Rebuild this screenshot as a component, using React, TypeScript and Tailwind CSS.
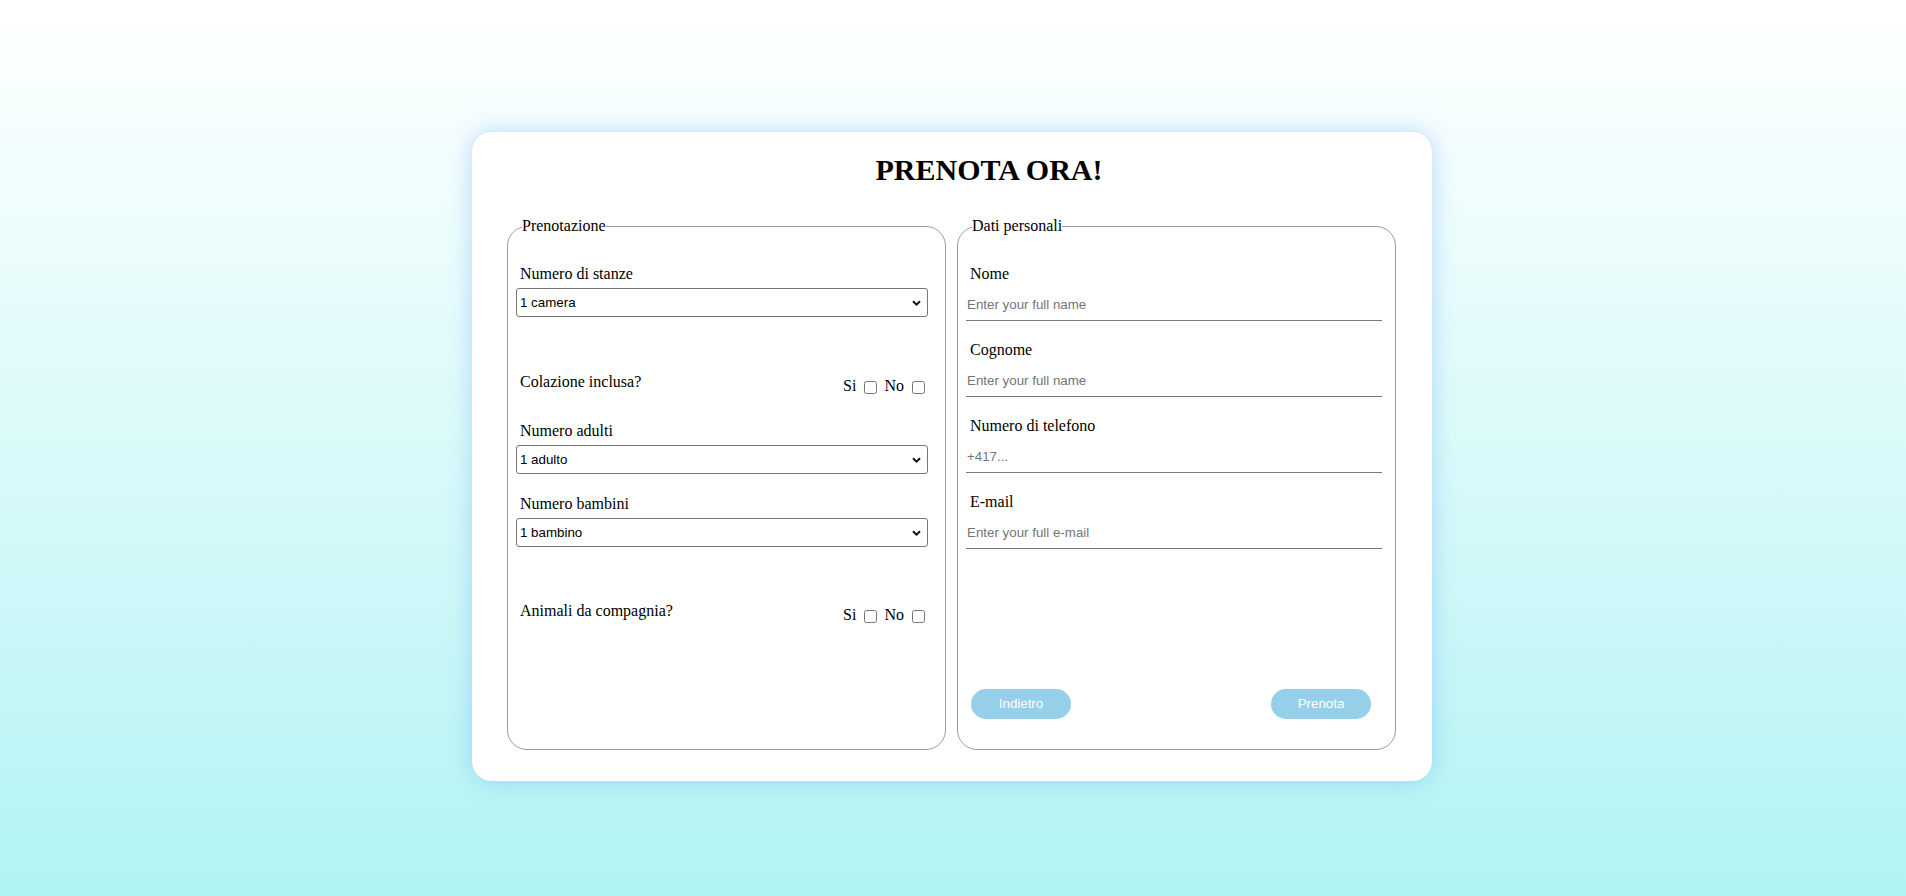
import React from 'react';

const serif = "font-['Liberation_Serif','Times_New_Roman',serif]";
const sans = "font-['Liberation_Sans',Arial,sans-serif]";

function Chevron() {
  return (
    <svg
      className="pointer-events-none absolute right-[7px] top-1/2 -translate-y-1/2"
      width="9"
      height="6"
      viewBox="0 0 9 6"
      fill="none"
    >
      <path d="M1 1.2 L4.5 4.6 L8 1.2" stroke="#111" strokeWidth="2" />
    </svg>
  );
}

function Select({ value, className }: { value: string; className?: string }) {
  return (
    <div className={`relative ml-[8px] w-[412px] ${className ?? ''}`}>
      <select
        defaultValue={value}
        className={`block h-[29px] w-full appearance-none rounded-[3px] border border-[#767676] bg-white pl-[3px] text-[13.33px] text-black ${sans}`}
      >
        <option>{value}</option>
      </select>
      <Chevron />
    </div>
  );
}

function YesNo({ label, className }: { label: string; className?: string }) {
  return (
    <div className={`flex h-[18px] items-start justify-between pl-[12px] pr-[20px] ${className ?? ''}`}>
      <span className="leading-[18px]">{label}</span>
      <div className="mt-[4px] flex items-start leading-[18px]">
        <span>Si</span>
        <input type="checkbox" className="ml-[8px] mt-[4px] h-[13px] w-[13px]" />
        <span className="ml-[7px]">No</span>
        <input type="checkbox" className="ml-[8px] mt-[4px] h-[13px] w-[13px]" />
      </div>
    </div>
  );
}

function Label({ children, className }: { children: React.ReactNode; className?: string }) {
  return <div className={`pl-[12px] leading-[18px] ${className ?? ''}`}>{children}</div>;
}

function TextField({ label, placeholder, first }: { label: string; placeholder: string; first?: boolean }) {
  return (
    <div className={first ? 'mt-[30px]' : 'mt-[20px]'}>
      <Label>{label}</Label>
      <input
        type="text"
        placeholder={placeholder}
        className={`mt-[5px] ml-[8px] block h-[33px] w-[416px] border-b border-[#7a7a7a] pl-[1px] text-[13.33px] text-black outline-none placeholder:text-[#757575] ${sans}`}
      />
    </div>
  );
}

export default function App() {
  return (
    <div className={`min-h-screen bg-linear-to-b from-white to-[#b1f3f4] pt-[132px] pr-[2px] pb-[115px] text-[16px] text-black ${serif}`}>
      <div className="mx-auto w-[960px] rounded-[20px] bg-white px-[35px] pb-[31px] pt-[21px] shadow-[0_0_22px_rgba(110,170,250,0.45)]">
        <h1 className="pl-[74px] text-center text-[30px] font-bold leading-[33px]">PRENOTA ORA!</h1>

        <div className="mt-[31px] flex items-stretch gap-[11px]">
          <fieldset className="w-[439px] rounded-[20px] border border-[#9b9b9b]">
            <legend className="ml-[14px] leading-[18px]">Prenotazione</legend>

            <Label className="mt-[30px]">Numero di stanze</Label>
            <Select value="1 camera" className="mt-[5px]" />

            <YesNo label="Colazione inclusa?" className="mt-[56px]" />

            <Label className="mt-[31px]">Numero adulti</Label>
            <Select value="1 adulto" className="mt-[5px]" />

            <Label className="mt-[21px]">Numero bambini</Label>
            <Select value="1 bambino" className="mt-[5px]" />

            <YesNo label="Animali da compagnia?" className="mt-[55px]" />
          </fieldset>

          <fieldset className="w-[439px] rounded-[20px] border border-[#9b9b9b] pb-[30px]">
            <legend className="ml-[14px] leading-[18px]">Dati personali</legend>

            <TextField label="Nome" placeholder="Enter your full name" first />
            <TextField label="Cognome" placeholder="Enter your full name" />
            <TextField label="Numero di telefono" placeholder="+417..." />
            <TextField label="E-mail" placeholder="Enter your full e-mail" />

            <div className="mt-[140px] flex justify-between pl-[13px] pr-[24px]">
              <button className={`h-[30px] w-[100px] rounded-full bg-[#95cfea] text-[13.33px] text-white ${sans}`}>
                Indietro
              </button>
              <button className={`h-[30px] w-[100px] rounded-full bg-[#95cfea] text-[13.33px] text-white ${sans}`}>
                Prenota
              </button>
            </div>
          </fieldset>
        </div>
      </div>
    </div>
  );
}
